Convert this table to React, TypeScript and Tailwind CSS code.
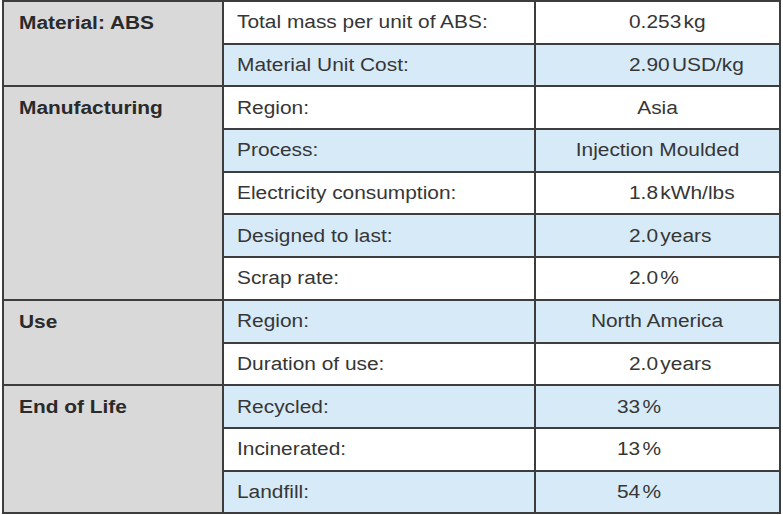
import React from "react";

type Row = {
  label: string;
  value: string;
  unit?: string;
  kind: "num" | "pct" | "text";
  blue?: boolean;
};

type Group = { title: string; rows: Row[] };

const GROUPS: Group[] = [
  {
    title: "Material: ABS",
    rows: [
      { label: "Total mass per unit of ABS:", value: "0.253", unit: "kg", kind: "num" },
      { label: "Material Unit Cost:", value: "2.90", unit: "USD/kg", kind: "num", blue: true },
    ],
  },
  {
    title: "Manufacturing",
    rows: [
      { label: "Region:", value: "Asia", kind: "text" },
      { label: "Process:", value: "Injection Moulded", kind: "text", blue: true },
      { label: "Electricity consumption:", value: "1.8", unit: "kWh/lbs", kind: "num" },
      { label: "Designed to last:", value: "2.0", unit: "years", kind: "num", blue: true },
      { label: "Scrap rate:", value: "2.0", unit: "%", kind: "num" },
    ],
  },
  {
    title: "Use",
    rows: [
      { label: "Region:", value: "North America", kind: "text", blue: true },
      { label: "Duration of use:", value: "2.0", unit: "years", kind: "num" },
    ],
  },
  {
    title: "End of Life",
    rows: [
      { label: "Recycled:", value: "33", unit: "%", kind: "pct", blue: true },
      { label: "Incinerated:", value: "13", unit: "%", kind: "pct" },
      { label: "Landfill:", value: "54", unit: "%", kind: "pct", blue: true },
    ],
  },
];

function ValueCell({ row }: { row: Row }) {
  const bg = row.blue ? "bg-[#d6eaf8]" : "bg-white";
  if (row.kind === "text") {
    return (
      <td className={`${bg} border-2 border-[#3d3d3d] text-center align-middle`}>
        <span className="inline-block scale-x-[1.16] origin-center">{row.value}</span>
      </td>
    );
  }
  const pad = row.kind === "pct" ? "pl-[81px]" : "pl-[93px]";
  return (
    <td className={`${bg} border-2 border-[#3d3d3d] ${pad} align-middle whitespace-nowrap`}>
      <span className="inline-block scale-x-[1.16] origin-left">
        {row.value}
        <span className="ml-[2px]">{row.unit}</span>
      </span>
    </td>
  );
}

export default function App() {
  return (
    <div className="w-[783px] h-[515px] bg-white pl-[2px] overflow-hidden">
      <table
        className="w-[777px] table-fixed border-collapse text-[18px] leading-[22px] text-[#363636]"
        style={{ fontFamily: '"Liberation Sans", Arial, sans-serif' }}
      >
        <colgroup>
          <col className="w-[220px]" />
          <col className="w-[312px]" />
          <col className="w-[245px]" />
        </colgroup>
        <tbody>
          {GROUPS.map((group) =>
            group.rows.map((row, i) => (
              <tr key={group.title + row.label} className="h-[42.7px]">
                {i === 0 && (
                  <td
                    rowSpan={group.rows.length}
                    className="bg-[#d9d9d9] border-2 border-[#3d3d3d] align-top pt-[10px] pl-[15px] font-bold text-[#2a2a2a]"
                  >
                    <span className="inline-block scale-x-[1.16] origin-left whitespace-nowrap">{group.title}</span>
                  </td>
                )}
                <td
                  className={`${row.blue ? "bg-[#d6eaf8]" : "bg-white"} border-2 border-[#3d3d3d] pl-[13px] align-middle whitespace-nowrap`}
                >
                  <span className="inline-block scale-x-[1.16] origin-left">{row.label}</span>
                </td>
                <ValueCell row={row} />
              </tr>
            ))
          )}
        </tbody>
      </table>
    </div>
  );
}
